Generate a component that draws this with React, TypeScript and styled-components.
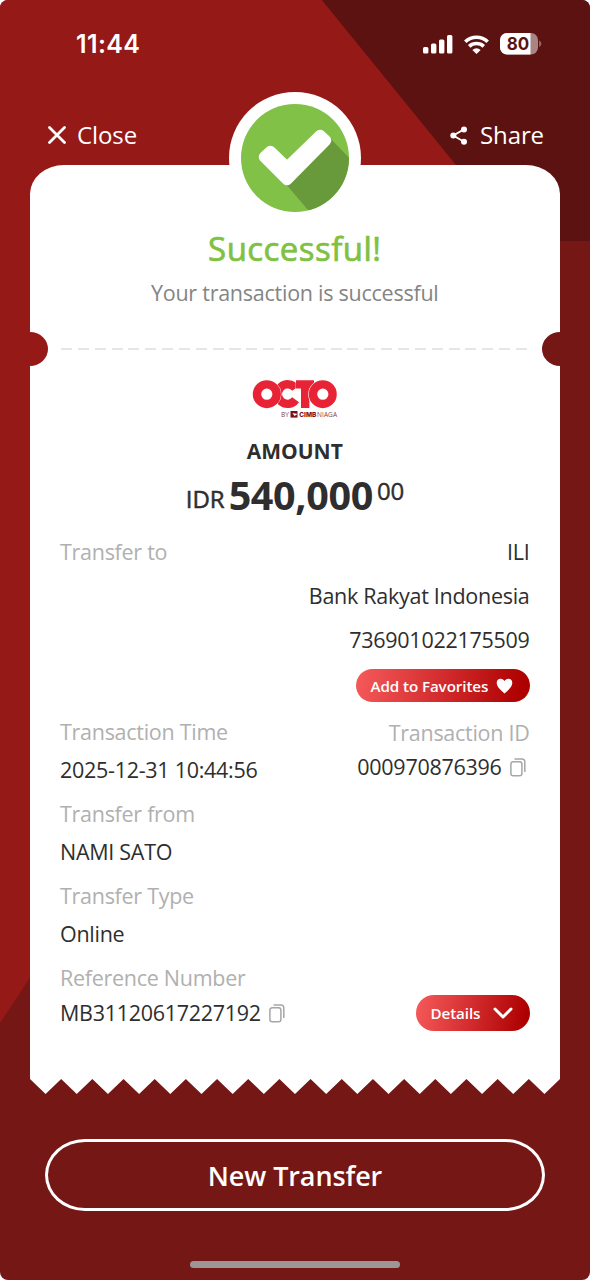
import React from "react";
import styled, { createGlobalStyle } from "styled-components";

const GlobalStyle = createGlobalStyle`
  * { box-sizing: border-box; }
  body { margin: 0; background: #fff; }
  button { border: 0; padding: 0; background: none; font: inherit; color: inherit; letter-spacing: inherit; }
`;

const Screen = styled.main`
  position: relative;
  isolation: isolate;
  display: flex;
  flex-direction: column;
  width: 590px;
  height: 1280px;
  overflow: hidden;
  border-radius: 8px;
  background: #751715;
  font-family: "Open Sans", sans-serif;
  color: #fff;
  &::before, &::after {
    content: "";
    position: absolute;
    inset: 0;
    z-index: -1;
  }
  &::before {
    background: #951917;
    clip-path: polygon(0 0, 322px 0, 518px 241px, 0 1023px);
  }
  &::after {
    background: #5c1210;
    clip-path: polygon(322px 0, 590px 0, 590px 241px, 518px 241px);
  }
`;

const StatusBar = styled.header`
  display: flex;
  align-items: center;
  justify-content: space-between;
  height: 88px;
  padding: 0 48px 0 76px;
`;

const Clock = styled.time`
  font: 600 25px/30px Inter, sans-serif;
  letter-spacing: 0.4px;
`;

const StatusIcons = styled.div`
  display: flex;
  align-items: center;
  gap: 11px;
  svg { display: block; }
`;

const NavBar = styled.nav`
  display: flex;
  justify-content: space-between;
  align-items: center;
  height: 32px;
  margin: 31px 46px 14px 48px;
`;

const NavAction = styled.button<{ $gap: number }>`
  display: flex;
  align-items: center;
  gap: ${(p) => p.$gap}px;
  font-size: 24px;
  line-height: 32px;
  letter-spacing: -0.1px;
  svg { display: block; }
`;

const Receipt = styled.section`
  position: relative;
  margin: 0 30px;
  height: 914px;
  padding: 65px 30.5px 0 30px;
  background: #fff;
  border-radius: 34px 34px 0 0 / 29px 29px 0 0;
  color: #2e2e2e;
`;

const Seal = styled.div`
  position: absolute;
  left: 199px;
  top: -73px;
  svg { display: block; }
`;

const Title = styled.h1`
  margin: 0;
  height: 38px;
  font-size: 33px;
  line-height: 38px;
  font-weight: 400;
  letter-spacing: 0.45px;
  text-align: center;
  color: #80c142;
  -webkit-text-stroke: 0.7px #80c142;
`;

const Subtitle = styled.p`
  margin: 9px 0 0;
  font-size: 21.5px;
  line-height: 32px;
  letter-spacing: -0.25px;
  text-align: center;
  color: #848484;
`;

const Perforation = styled.div`
  display: flex;
  align-items: center;
  justify-content: space-between;
  height: 34px;
  margin: 23px -30.5px 0 -30px;
`;

const Notch = styled.i<{ $right?: boolean }>`
  width: 18px;
  height: 34px;
  background: ${(p) => (p.$right ? "#751715" : "#951917")};
  border-radius: ${(p) => (p.$right ? "18px 0 0 18px / 17px 0 0 17px" : "0 18px 18px 0 / 0 17px 17px 0")};
`;

const Dashes = styled.i`
  width: 466px;
  height: 2px;
  margin-right: 3px;
  background: repeating-linear-gradient(90deg, #e6e6e6 0 11px, transparent 11px 16.85px);
`;

const Logo = styled.svg`
  display: block;
  margin: 10px auto 0;
`;

const AmountLabel = styled.h2`
  margin: 11.5px 0 0;
  font-size: 21px;
  line-height: 30px;
  font-weight: 700;
  text-align: center;
`;

const Amount = styled.p`
  display: flex;
  justify-content: center;
  align-items: baseline;
  margin: -1px 0 0;
  height: 61px;
  line-height: 60px;
`;

const Currency = styled.span`
  position: relative;
  top: -2px;
  font-size: 24px;
  margin-right: 4px;
  -webkit-text-stroke: 0.5px #2e2e2e;
`;

const Whole = styled.strong`
  font-size: 39.5px;
  font-weight: 700;
  letter-spacing: -0.35px;
`;

const Cents = styled.sup`
  position: relative;
  top: -10px;
  margin-left: 4px;
  font-size: 24px;
  line-height: 1;
  letter-spacing: -0.3px;
  vertical-align: baseline;
  -webkit-text-stroke: 0.4px #2e2e2e;
`;

const Line = styled.div<{ $top: number; $end?: boolean }>`
  display: flex;
  align-items: center;
  justify-content: ${(p) => (p.$end ? "flex-end" : "space-between")};
  height: 30px;
  margin-top: ${(p) => p.$top}px;
  font-size: 21.5px;
  line-height: 30px;
  letter-spacing: -0.28px;
  white-space: nowrap;
`;

const Label = styled.span`
  color: #b0b0b0;
`;

const CopyValue = styled.span`
  display: flex;
  align-items: center;
  gap: 8px;
  padding-right: 4px;
  svg { display: block; }
`;

const Columns = styled.div`
  display: flex;
  justify-content: space-between;
`;

const Column = styled.div``;

const Pill = styled.button<{ $w: number; $h: number }>`
  display: flex;
  align-items: center;
  justify-content: space-between;
  width: ${(p) => p.$w}px;
  height: ${(p) => p.$h}px;
  padding: 0 17px 0 15px;
  border-radius: 18px;
  background: linear-gradient(100deg, #f65a5a 0%, #d22b2d 50%, #ad0000 95%);
  color: #fff;
  font-size: 15.2px;
  font-weight: 600;
  line-height: 20px;
  letter-spacing: -0.1px;
  svg { display: block; }
`;

const FavoriteRow = styled.div`
  display: flex;
  justify-content: flex-end;
  margin-top: 14px;
`;

const TEETH = 17;
const teeth = Array.from({ length: TEETH }, (_, i) => [
  `${((i + 0.5) / TEETH) * 100}% 100%`,
  `${((i + 1) / TEETH) * 100}% 1px`,
])
  .flat()
  .join(", ");

const TornEdge = styled.div`
  height: 16px;
  margin: -1px 30px 0;
  background: #fff;
  clip-path: polygon(0 0, 0 1px, ${teeth}, 100% 0);
`;

const NewTransfer = styled.button`
  height: 72px;
  margin: 45px 45px 0;
  padding-top: 2px;
  border: 3px solid #fff;
  border-radius: 40px / 36px;
  font-size: 27px;
  font-weight: 600;
  line-height: 36px;
  letter-spacing: -0.1px;
`;

const HomeIndicator = styled.div`
  width: 210px;
  height: 7px;
  margin: 50px auto 0;
  border-radius: 4px;
  background: #9b9798;
`;

const CopyIcon = () => (
  <svg width="16" height="19" viewBox="0 0 16 19" fill="none" stroke="#a6a6a6" strokeWidth="1.5">
    <rect x="0.9" y="3.7" width="11" height="14" rx="2.3" />
    <path d="M4.5 .9H12Q14.8 .9 14.8 3.7V14" />
  </svg>
);

export default function App() {
  return (
    <>
      <GlobalStyle />
      <Screen>
        <StatusBar>
          <Clock>11:44</Clock>
          <StatusIcons>
            <svg width="30" height="19" viewBox="0 0 30 19" fill="#fff">
              <rect x="0" y="12" width="5.4" height="6.5" rx="1.5" />
              <rect x="8" y="8.5" width="5.4" height="10" rx="1.5" />
              <rect x="16" y="4.5" width="5.4" height="14" rx="1.5" />
              <rect x="24" y="0" width="5.4" height="18.5" rx="1.5" />
            </svg>
            <svg width="25" height="19" viewBox="0 0 25 19" fill="none" stroke="#fff" strokeWidth="3.6">
              <path d="M1.3 6.8C7.6 .7 17.4 .7 23.7 6.8" />
              <path d="M5.2 11.4C9.3 7.6 15.7 7.6 19.8 11.4" />
              <path d="M12.5 19L8.3 15Q12.5 11.4 16.7 15Z" fill="#fff" stroke="none" />
            </svg>
            <svg width="42" height="22" viewBox="0 0 42 22">
              <clipPath id="cell"><rect width="38" height="21.5" rx="7" /></clipPath>
              <g clipPath="url(#cell)">
                <rect width="38" height="22" fill="#a98483" />
                <rect width="30.5" height="22" fill="#fff" />
              </g>
              <path d="M39 7.5Q41.5 8.5 41.5 10.8T39 14Z" fill="#8f6261" />
              <text x="18" y="17.2" textAnchor="middle" fontFamily="Inter, sans-serif" fontWeight="700" fontSize="18" textLength="22.5" lengthAdjust="spacingAndGlyphs" fill="#5c1210">80</text>
            </svg>
          </StatusIcons>
        </StatusBar>
        <NavBar>
          <NavAction $gap={11}>
            <svg width="18" height="18" viewBox="0 0 18 18" stroke="#fff" strokeWidth="2.8" strokeLinecap="round">
              <path d="M1.5 1.5L16.5 16.5M16.5 1.5L1.5 16.5" />
            </svg>
            Close
          </NavAction>
          <NavAction $gap={12}>
            <svg width="18" height="19" viewBox="0 0 18 19" fill="#fff">
              <path d="M14 3.4L3.3 9.5L14 15.8" fill="none" stroke="#fff" strokeWidth="1.8" />
              <circle cx="14" cy="3.4" r="3" />
              <circle cx="3.3" cy="9.5" r="3" />
              <circle cx="14" cy="15.7" r="3" />
            </svg>
            Share
          </NavAction>
        </NavBar>

        <Receipt>
          <Seal>
            <svg width="132" height="132" viewBox="0 0 132 132">
              <clipPath id="disc"><circle cx="66" cy="66" r="54" /></clipPath>
              <circle cx="66" cy="66" r="66" fill="#fff" />
              <circle cx="66" cy="66" r="54" fill="#82c147" />
              <path d="M56 91L100 45L125 71V125H85Z" fill="#68993a" clipPath="url(#disc)" />
              <path d="M35 65L41.5 59L58 75L91 43L97 48.5L58 88Z" fill="#fff" stroke="#fff" strokeWidth="10.6" strokeLinejoin="round" />
            </svg>
          </Seal>
          <Title>Successful!</Title>
          <Subtitle>Your transaction is successful</Subtitle>
          <Perforation>
            <Notch />
            <Dashes />
            <Notch $right />
          </Perforation>

          <Logo width="94" height="48" viewBox="-5 -4 94 48" role="img" aria-label="OCTO by CIMB Niaga">
            <g fill="none" stroke="#e82335" strokeWidth="8.4">
              <path d="M42.6 8.4A9.8 9.8 0 1 0 42.6 19.8" />
              <circle cx="13.8" cy="14.2" r="14.3" stroke="#fff" strokeWidth="0.7" />
              <circle cx="13.8" cy="14.2" r="9.8" />
              <path d="M42.7 4.6H62M52 4V28.5" stroke="#fff" strokeWidth="9.6" />
              <path d="M43 4.4H61M52.2 4V28" />
              <circle cx="69.8" cy="14.2" r="9.8" stroke="#fff" strokeWidth="9.6" />
              <circle cx="69.8" cy="14.2" r="9.8" />
            </g>
            <text x="28" y="37" fontFamily="Open Sans, sans-serif" fontSize="6.5" fill="#8a3a40" textLength="8">BY</text>
            <rect x="37.5" y="31" width="7" height="6.6" fill="#7d1019" />
            <path d="M39.5 33L44.5 34L41.5 36Z" fill="#fff" />
            <text x="46.3" y="37" fontFamily="Inter, sans-serif" fontWeight="800" fontSize="6.5" fill="#7d1019" textLength="17" lengthAdjust="spacingAndGlyphs">CIMB</text>
            <text x="64" y="37" fontFamily="Open Sans, sans-serif" fontSize="6.5" fill="#8a3a40" textLength="20">NIAGA</text>
          </Logo>

          <AmountLabel>AMOUNT</AmountLabel>
          <Amount>
            <Currency>IDR</Currency>
            <Whole>540,000</Whole>
            <Cents>00</Cents>
          </Amount>

          <Line $top={11}><Label>Transfer to</Label><span>ILI</span></Line>
          <Line $top={14} $end>Bank Rakyat Indonesia</Line>
          <Line $top={14.5} $end>736901022175509</Line>
          <FavoriteRow>
            <Pill $w={174} $h={33}>
              Add to Favorites
              <svg width="17" height="16" viewBox="0 0 17 16" fill="#fff">
                <path d="M8.5 15.5C5 12.3 .7 9 .7 4.8C.7 .7 5.8 -.7 8.5 3C11.2 -.7 16.3 .7 16.3 4.8C16.3 9 12 12.3 8.5 15.5Z" />
              </svg>
            </Pill>
          </FavoriteRow>

          <Columns>
            <Column>
              <Line $top={15}><Label>Transaction Time</Label></Line>
              <Line $top={8}>2025-12-31 10:44:56</Line>
            </Column>
            <Column>
              <Line $top={16} $end><Label>Transaction ID</Label></Line>
              <Line $top={4} $end><CopyValue>000970876396 <CopyIcon /></CopyValue></Line>
            </Column>
          </Columns>
          <Line $top={14}><Label>Transfer from</Label></Line>
          <Line $top={8}>NAMI SATO</Line>
          <Line $top={14}><Label>Transfer Type</Label></Line>
          <Line $top={8}>Online</Line>
          <Line $top={14}><Label>Reference Number</Label></Line>
          <Line $top={5}>
            <CopyValue>MB31120617227192 <CopyIcon /></CopyValue>
            <Pill $w={114} $h={36}>
              Details
              <svg width="20" height="13" viewBox="0 0 20 13" fill="none" stroke="#fff" strokeWidth="3" strokeLinecap="round" strokeLinejoin="round">
                <path d="M2 2L10 10L18 2" />
              </svg>
            </Pill>
          </Line>
        </Receipt>
        <TornEdge />

        <NewTransfer>New Transfer</NewTransfer>
        <HomeIndicator />
      </Screen>
    </>
  );
}
